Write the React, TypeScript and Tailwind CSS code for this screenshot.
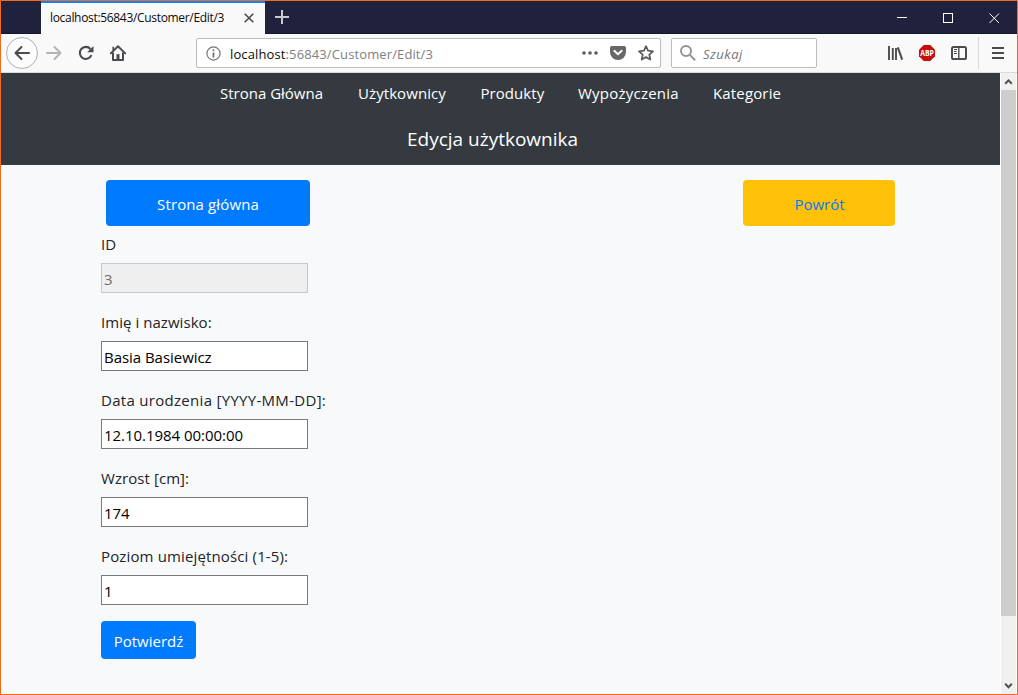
const nav = [
  { label: "Strona Główna", cls: "w-[138px]" },
  { label: "Użytkownicy", cls: "w-[122.5px] tracking-[0.08px]" },
  { label: "Produkty", cls: "w-[97.5px] tracking-[0.05px]" },
  { label: "Wypożyczenia", cls: "w-[135px] tracking-[0.23px]" },
  { label: "Kategorie", cls: "w-[80px] tracking-[0.15px]" },
];

const fields = [
  { label: "ID", value: "3", disabled: true, cls: "tracking-[0.1px]" },
  { label: "Imię i nazwisko:", value: "Basia Basiewicz", cls: "tracking-[0.05px]" },
  { label: "Data urodzenia [YYYY-MM-DD]:", value: "12.10.1984 00:00:00", cls: "tracking-[0.3px]" },
  { label: "Wzrost [cm]:", value: "174", cls: "tracking-[0.07px]" },
  { label: "Poziom umiejętności (1-5):", value: "1", cls: "tracking-[0.14px]" },
];

function TabBar() {
  return (
    <div className="flex h-[33px] shrink-0 border-b border-[#14142b] bg-[#20213d] pl-10">
      <div className="-mb-px flex w-[224px] items-center justify-between border-t-2 border-[#0a84ff] bg-[#f9f9fa] pr-[11px] pl-[9px]">
        <span className="-mt-px text-[12px] leading-4 tracking-[-0.32px] whitespace-nowrap text-[#0c0c0d]">
          localhost:56843/Customer/Edit/3
        </span>
        <svg width="10" height="10" viewBox="0 0 10 10" className="-mt-px" stroke="#4a4a4f" strokeWidth="1.6">
          <path d="M.7.7l8.6 8.6M9.3.7L.7 9.3" />
        </svg>
      </div>
      <svg width="14" height="14" viewBox="0 0 14 14" className="mt-[9px] ml-[10px]" stroke="#c9c9cf" strokeWidth="2">
        <path d="M7 0v14M0 7h14" />
      </svg>
      <div className="ml-auto flex items-start gap-[35px] pt-3 pr-[17px]">
        <svg width="11" height="11" viewBox="0 0 11 11" stroke="#fff">
          <path d="M0 4.5h10" />
        </svg>
        <svg width="11" height="11" viewBox="0 0 11 11" stroke="#fff" fill="none">
          <rect x=".5" y=".5" width="9" height="9" />
        </svg>
        <svg width="11" height="11" viewBox="0 0 11 11" stroke="#fff">
          <path d="M.5.5l9.5 9.5M10 .5L.5 10" />
        </svg>
      </div>
    </div>
  );
}

function Toolbar() {
  return (
    <div className="flex h-[39px] shrink-0 items-center border-b border-[#d7dbd8] bg-[#f9f9fa] pl-[5px]">
      <div className="flex size-8 items-center justify-center rounded-full border border-[#b1b1b3] bg-[#fcfcfc]">
        <svg width="16" height="16" viewBox="0 0 16 16" fill="none" stroke="#4a4a4f" strokeWidth="2" strokeLinecap="round" strokeLinejoin="round">
          <path d="M15 8H1.5M7.5 2l-6 6 6 6" />
        </svg>
      </div>
      <svg width="16" height="16" viewBox="0 0 16 16" className="ml-2" fill="none" stroke="#b4b4b6" strokeWidth="2" strokeLinecap="round" strokeLinejoin="round">
        <path d="M1 8h13.5M8.5 2l6 6-6 6" />
      </svg>
      <svg width="16" height="16" viewBox="0 0 16 16" className="ml-4" fill="none">
        <path d="M13.4 10.2A6 6 0 1 1 12.4 4" stroke="#4a4a4f" strokeWidth="2.1" />
        <path d="M15.5 1v6.2H9.2z" fill="#4a4a4f" />
      </svg>
      <svg width="16" height="16" viewBox="0 0 16 16" className="ml-4" fill="none" stroke="#4a4a4f" strokeWidth="2" strokeLinejoin="round">
        <path d="M.8 8.4L8 1.3l7.2 7.1" strokeLinecap="round" />
        <path d="M3 7.5V15h10V7.5" />
        <path d="M8 9.2V14.5" strokeWidth="3" />
        <path d="M3.2 5V1.8" strokeWidth="1.6" />
      </svg>
      <div className="ml-[70px] flex h-[30px] w-[465px] items-center rounded-[2px] border border-[#bcbcbe] bg-white pr-[6px] pl-[9px]">
        <svg width="15" height="15" viewBox="0 0 15 15" fill="none" stroke="#737373">
          <circle cx="7.5" cy="7.5" r="6.6" strokeWidth="1.2" />
          <path d="M7.5 6.5v5" strokeWidth="1.8" />
          <path d="M7.5 3.4v1.8" strokeWidth="1.8" />
        </svg>
        <span className="ml-[9px] pt-[2px] text-[13px] leading-4 tracking-[0.12px] whitespace-nowrap text-[#808080]">
          <span className="text-[#0c0c0d]">localhost</span>:56843/Customer/Edit/3
        </span>
        <svg width="16" height="4" viewBox="0 0 16 4" className="ml-auto" fill="#5c5c60">
          <circle cx="2" cy="2" r="1.8" />
          <circle cx="8" cy="2" r="1.8" />
          <circle cx="14" cy="2" r="1.8" />
        </svg>
        <svg width="16" height="14" viewBox="0 0 16 14" className="ml-3">
          <path d="M1.8 0h12.4Q16 0 16 1.8V6a8 8 0 0 1-16 0V1.8Q0 0 1.8 0z" fill="#68686b" />
          <path d="M4.3 4.8L8 8.3l3.7-3.5" fill="none" stroke="#fff" strokeWidth="1.9" strokeLinecap="round" strokeLinejoin="round" />
        </svg>
        <svg width="16" height="16" viewBox="0 0 16 16" className="ml-3" fill="none" stroke="#5c5c60" strokeWidth="1.8" strokeLinejoin="round">
          <path d="M8 1.2l2 4.5 5 .6-3.7 3.3 1 4.9L8 12.1l-4.3 2.4 1-4.9L1 6.3l5-.6z" />
        </svg>
      </div>
      <div className="ml-[10px] flex h-[30px] w-[146px] items-center rounded-[2px] border border-[#bcbcbe] bg-white pl-2">
        <svg width="16" height="16" viewBox="0 0 16 16" fill="none" stroke="#949496" strokeWidth="2">
          <circle cx="6" cy="6" r="5" />
          <path d="M9.6 9.6l5.6 5.6" />
        </svg>
        <span className="ml-[7px] pt-[2px] text-[13px] leading-4 tracking-[0.5px] text-[#757575] italic">Szukaj</span>
      </div>
      <svg width="16" height="14" viewBox="0 0 16 14" className="mr-[15px] ml-auto" fill="none" stroke="#4a4a4f" strokeWidth="2">
        <path d="M1 0v14M4.8 2v12M8 2v12" strokeWidth="1.9" />
        <path d="M9.8 1.3l4.4 12.4" />
      </svg>
      <svg width="16" height="16" viewBox="0 0 16 16" className="overflow-visible">
        <path d="M4.7 0h6.6L16 4.7v6.6L11.3 16H4.7L0 11.3V4.7z" fill="#c70d0d" />
        <text x="1.2" y="11" fontSize="8.4" fontWeight="700" fill="#fff" textLength="13.6" lengthAdjust="spacingAndGlyphs">ABP</text>
      </svg>
      <svg width="16" height="14" viewBox="0 0 16 14" className="ml-4" fill="none" stroke="#4a4a4f">
        <rect x="1" y="1" width="14" height="12" rx="1.6" strokeWidth="2" />
        <path d="M7.8 1v12" strokeWidth="1.4" />
        <path d="M3 3.5h3M3 5.5h2.5M3 7.5h3" />
      </svg>
      <div className="mr-[13px] ml-[11px] h-8 w-px bg-[#d9d9db]" />
      <svg width="12" height="12" viewBox="0 0 12 12" className="mr-[13px]" stroke="#4a4a4f" strokeWidth="2">
        <path d="M0 1h12M0 6h12M0 11h12" />
      </svg>
    </div>
  );
}

function Scrollbar() {
  return (
    <div className="flex w-[17px] shrink-0 flex-col items-center border-x border-white bg-[#f0f0f0]">
      <svg width="15" height="17" viewBox="0 0 15 17" fill="none" stroke="#505050" strokeWidth="2" className="shrink-0">
        <path d="M4.2 10.8l3.3-3.4 3.3 3.4" />
      </svg>
      <div className="h-[526px] w-full shrink-0 bg-[#cdcdcd]" />
      <svg width="15" height="17" viewBox="0 0 15 17" fill="none" stroke="#505050" strokeWidth="2" className="mt-auto shrink-0">
        <path d="M4.2 6.8l3.3 3.4 3.3-3.4" />
      </svg>
    </div>
  );
}

export default function App() {
  return (
    <div className="flex h-[695px] w-[1018px] flex-col overflow-hidden border border-[#f26b1d] bg-[#f8f9fa] font-['Open_Sans',sans-serif] text-[15px] leading-[22px] text-[#212529]">
      <TabBar />
      <Toolbar />
      <div className="flex min-h-0 grow">
        <div className="flex grow flex-col">
          <header className="h-[92px] bg-[#343a40] text-white">
            <nav className="flex pt-[9px] pl-[219px]">
              {nav.map((n) => (
                <a key={n.label} className={n.cls}>{n.label}</a>
              ))}
            </nav>
            <h1 className="pt-[21px] pl-[406px] text-[19px] leading-7">Edycja użytkownika</h1>
          </header>
          <main className="pl-[100px]">
            <div className="flex justify-between pt-[15px] pr-[105px] pl-[5px]">
              <a className="flex h-[46px] w-[204px] items-center justify-center rounded bg-[#007bff] pt-[2px] tracking-[0.12px] text-white">
                Strona główna
              </a>
              <a className="flex h-[46px] w-[152px] items-center justify-center rounded bg-[#ffc107] pt-[2px] pl-px text-[#007bff]">
                Powrót
              </a>
            </div>
            <form className="flex flex-col items-start pt-[7px]">
              {fields.map((f) => (
                <label key={f.label} className="mb-[18px] flex flex-col last-of-type:mb-4">
                  <span className={`h-[30px] ${f.cls}`}>{f.label}</span>
                  <input
                    className="h-[30px] w-[207px] border border-[#7a7a7a] bg-white px-[2px] pt-[1px] tracking-[-0.04px] text-black disabled:border-[#c8c8c8] disabled:bg-[#efefef] disabled:text-[#6d6d6d]"
                    defaultValue={f.value}
                    disabled={f.disabled}
                  />
                </label>
              ))}
              <button type="button" className="h-[38px] w-[95px] rounded bg-[#007bff] pt-[1px] text-white">
                Potwierdź
              </button>
            </form>
          </main>
        </div>
        <Scrollbar />
      </div>
    </div>
  );
}
